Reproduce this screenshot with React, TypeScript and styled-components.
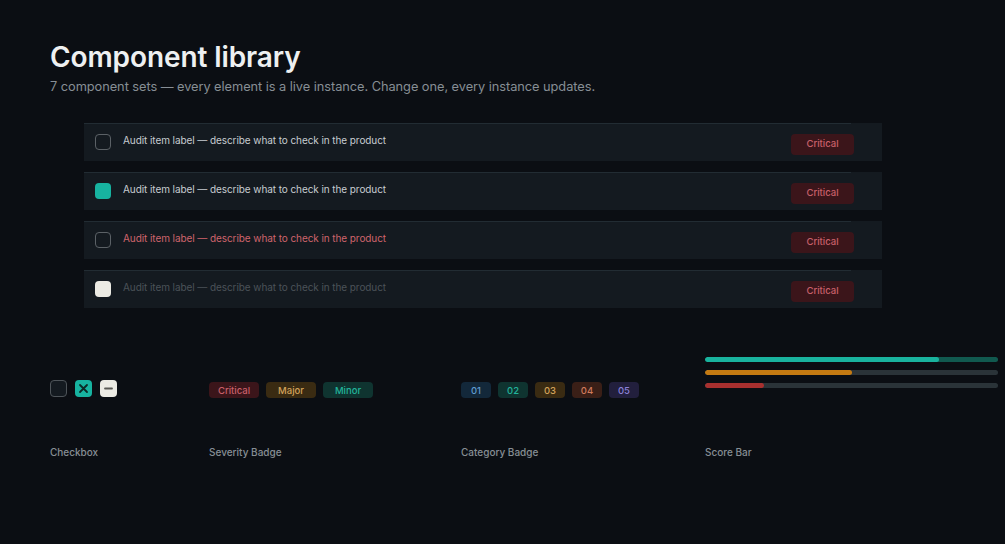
import React from "react"
import styled, { createGlobalStyle, css } from "styled-components"

const GlobalStyle = createGlobalStyle`
  html, body {
    margin: 0;
    padding: 0;
    background: #0b0e13;
  }
  body {
    font-family: Inter, "Noto Sans", "Liberation Sans", sans-serif;
    -webkit-font-smoothing: antialiased;
  }
`

type RowState = "default" | "checked" | "error" | "disabled"
type Tone = "red" | "amber" | "teal" | "blue" | "rust" | "violet"

const tones: Record<Tone, { bg: string; fg: string }> = {
  red: { bg: "#3b151a", fg: "#c9606a" },
  amber: { bg: "#3a2b12", fg: "#d3a25a" },
  teal: { bg: "#0f3430", fg: "#22b39b" },
  blue: { bg: "#13283a", fg: "#5f9bd0" },
  rust: { bg: "#3a1f17", fg: "#d07b5c" },
  violet: { bg: "#221f3d", fg: "#8b80d8" },
}

const Page = styled.div`
  width: 1005px;
  height: 544px;
  box-sizing: border-box;
  padding: 38px 0 0 50px;
  overflow: hidden;
`

const Title = styled.h1`
  margin: 0;
  font-size: 28px;
  line-height: 38px;
  font-weight: 600;
  letter-spacing: -0.1px;
  color: #eef0f1;
`

const Subtitle = styled.p`
  margin: 2px 0 0;
  font-size: 12.8px;
  line-height: 18px;
  letter-spacing: -0.05px;
  color: #878e95;
`

const Rows = styled.div`
  margin: 27px 0 0 34px;
  width: 798px;
  display: flex;
  flex-direction: column;
  gap: 11px;
`

const Row = styled.div`
  height: 38px;
  box-sizing: border-box;
  display: flex;
  align-items: flex-start;
  padding: 11px 28px 0 11px;
  background-color: #141a20;
  background-image: linear-gradient(#222c33, #222c33);
  background-size: 767px 1px;
  background-repeat: no-repeat;
`

const RowBox = styled.span<{ $state: RowState }>`
  width: 16px;
  height: 16px;
  box-sizing: border-box;
  border-radius: 4px;
  flex: none;
  ${({ $state }) =>
    $state === "checked"
      ? css`background: #17b3a0;`
      : $state === "disabled"
        ? css`background: #ecebe4;`
        : css`border: 1.5px solid #5b6166;`}
`

const RowLabel = styled.span<{ $state: RowState }>`
  flex: 1;
  margin: -2px 0 0 12px;
  font-size: 10px;
  line-height: 16px;
  letter-spacing: -0.08px;
  color: ${({ $state }) =>
    $state === "error" ? "#cf646c" : $state === "disabled" ? "#4b5258" : "#c7ccd1"};
`

const Badge = styled.span<{ $tone: Tone; $w: number; $h: number }>`
  width: ${({ $w }) => $w}px;
  height: ${({ $h }) => $h}px;
  border-radius: 4px;
  flex: none;
  display: inline-flex;
  align-items: center;
  justify-content: center;
  font-size: 9.5px;
  font-weight: 500;
  background: ${({ $tone }) => tones[$tone].bg};
  color: ${({ $tone }) => tones[$tone].fg};
`

const RowBadge = styled(Badge)`
  padding-bottom: 3px;
  box-sizing: border-box;
`

const Sets = styled.div`
  margin-top: 49px;
  display: grid;
  grid-template-columns: 159px 252px 244px 292px;
`

const Set = styled.div`
  display: flex;
  flex-direction: column;
`

const Preview = styled.div<{ $top: number }>`
  height: 88px;
  box-sizing: border-box;
  padding-top: ${({ $top }) => $top}px;
  display: flex;
  flex-direction: column;
`

const Inline = styled.div<{ $gap: number }>`
  display: flex;
  align-items: center;
  gap: ${({ $gap }) => $gap}px;
`

const SetLabel = styled.div`
  font-size: 10px;
  line-height: 14px;
  font-weight: 500;
  color: #878e95;
`

const Box = styled.span<{ $kind: "empty" | "checked" | "mixed" }>`
  width: 17px;
  height: 17px;
  box-sizing: border-box;
  border-radius: 4px;
  display: inline-flex;
  align-items: center;
  justify-content: center;
  ${({ $kind }) =>
    $kind === "empty"
      ? css`
          background: #141a20;
          border: 1.5px solid #4e5459;
        `
      : $kind === "checked"
        ? css`background: #17b3a0;`
        : css`background: #ecebe4;`}
`

const Bars = styled.div`
  display: flex;
  flex-direction: column;
  gap: 8px;
  width: 293px;
`

const Track = styled.div<{ $bg: string }>`
  height: 5px;
  border-radius: 3px;
  background: ${({ $bg }) => $bg};
  overflow: hidden;
`

const Fill = styled.div<{ $bg: string }>`
  height: 100%;
  border-radius: 3px;
  background: ${({ $bg }) => $bg};
`

const rows: RowState[] = ["default", "checked", "error", "disabled"]

const bars = [
  { track: "#11594f", fill: "#19b39e", pct: 80 },
  { track: "#2a3338", fill: "#c47a12", pct: 50 },
  { track: "#2a3338", fill: "#a8302f", pct: 20 },
]

export default function App() {
  return (
    <Page>
      <GlobalStyle />
      <Title>Component library</Title>
      <Subtitle>
        7 component sets — every element is a live instance. Change one, every instance updates.
      </Subtitle>

      <Rows>
        {rows.map((state) => (
          <Row key={state}>
            <RowBox $state={state} />
            <RowLabel $state={state}>
              Audit item label — describe what to check in the product
            </RowLabel>
            <RowBadge $tone="red" $w={63} $h={21}>
              Critical
            </RowBadge>
          </Row>
        ))}
      </Rows>

      <Sets>
        <Set>
          <Preview $top={23}>
            <Inline $gap={8}>
              <Box $kind="empty" />
              <Box $kind="checked">
                <svg width="11" height="11" viewBox="0 0 11 11">
                  <path d="M2 2 L9 9 M9 2 L2 9" stroke="#0c2a27" strokeWidth="1.8" strokeLinecap="round" />
                </svg>
              </Box>
              <Box $kind="mixed">
                <svg width="11" height="11" viewBox="0 0 11 11">
                  <path d="M2 5.5 H9" stroke="#5a5a55" strokeWidth="1.8" strokeLinecap="round" />
                </svg>
              </Box>
            </Inline>
          </Preview>
          <SetLabel>Checkbox</SetLabel>
        </Set>

        <Set>
          <Preview $top={25}>
            <Inline $gap={7}>
              <Badge $tone="red" $w={50} $h={16}>Critical</Badge>
              <Badge $tone="amber" $w={50} $h={16}>Major</Badge>
              <Badge $tone="teal" $w={50} $h={16}>Minor</Badge>
            </Inline>
          </Preview>
          <SetLabel>Severity Badge</SetLabel>
        </Set>

        <Set>
          <Preview $top={25}>
            <Inline $gap={7}>
              <Badge $tone="blue" $w={30} $h={16}>01</Badge>
              <Badge $tone="teal" $w={30} $h={16}>02</Badge>
              <Badge $tone="amber" $w={30} $h={16}>03</Badge>
              <Badge $tone="rust" $w={30} $h={16}>04</Badge>
              <Badge $tone="violet" $w={30} $h={16}>05</Badge>
            </Inline>
          </Preview>
          <SetLabel>Category Badge</SetLabel>
        </Set>

        <Set>
          <Preview $top={0}>
            <Bars>
              {bars.map((b, i) => (
                <Track key={i} $bg={b.track}>
                  <Fill $bg={b.fill} style={{ width: `${b.pct}%` }} />
                </Track>
              ))}
            </Bars>
          </Preview>
          <SetLabel>Score Bar</SetLabel>
        </Set>
      </Sets>
    </Page>
  )
}
